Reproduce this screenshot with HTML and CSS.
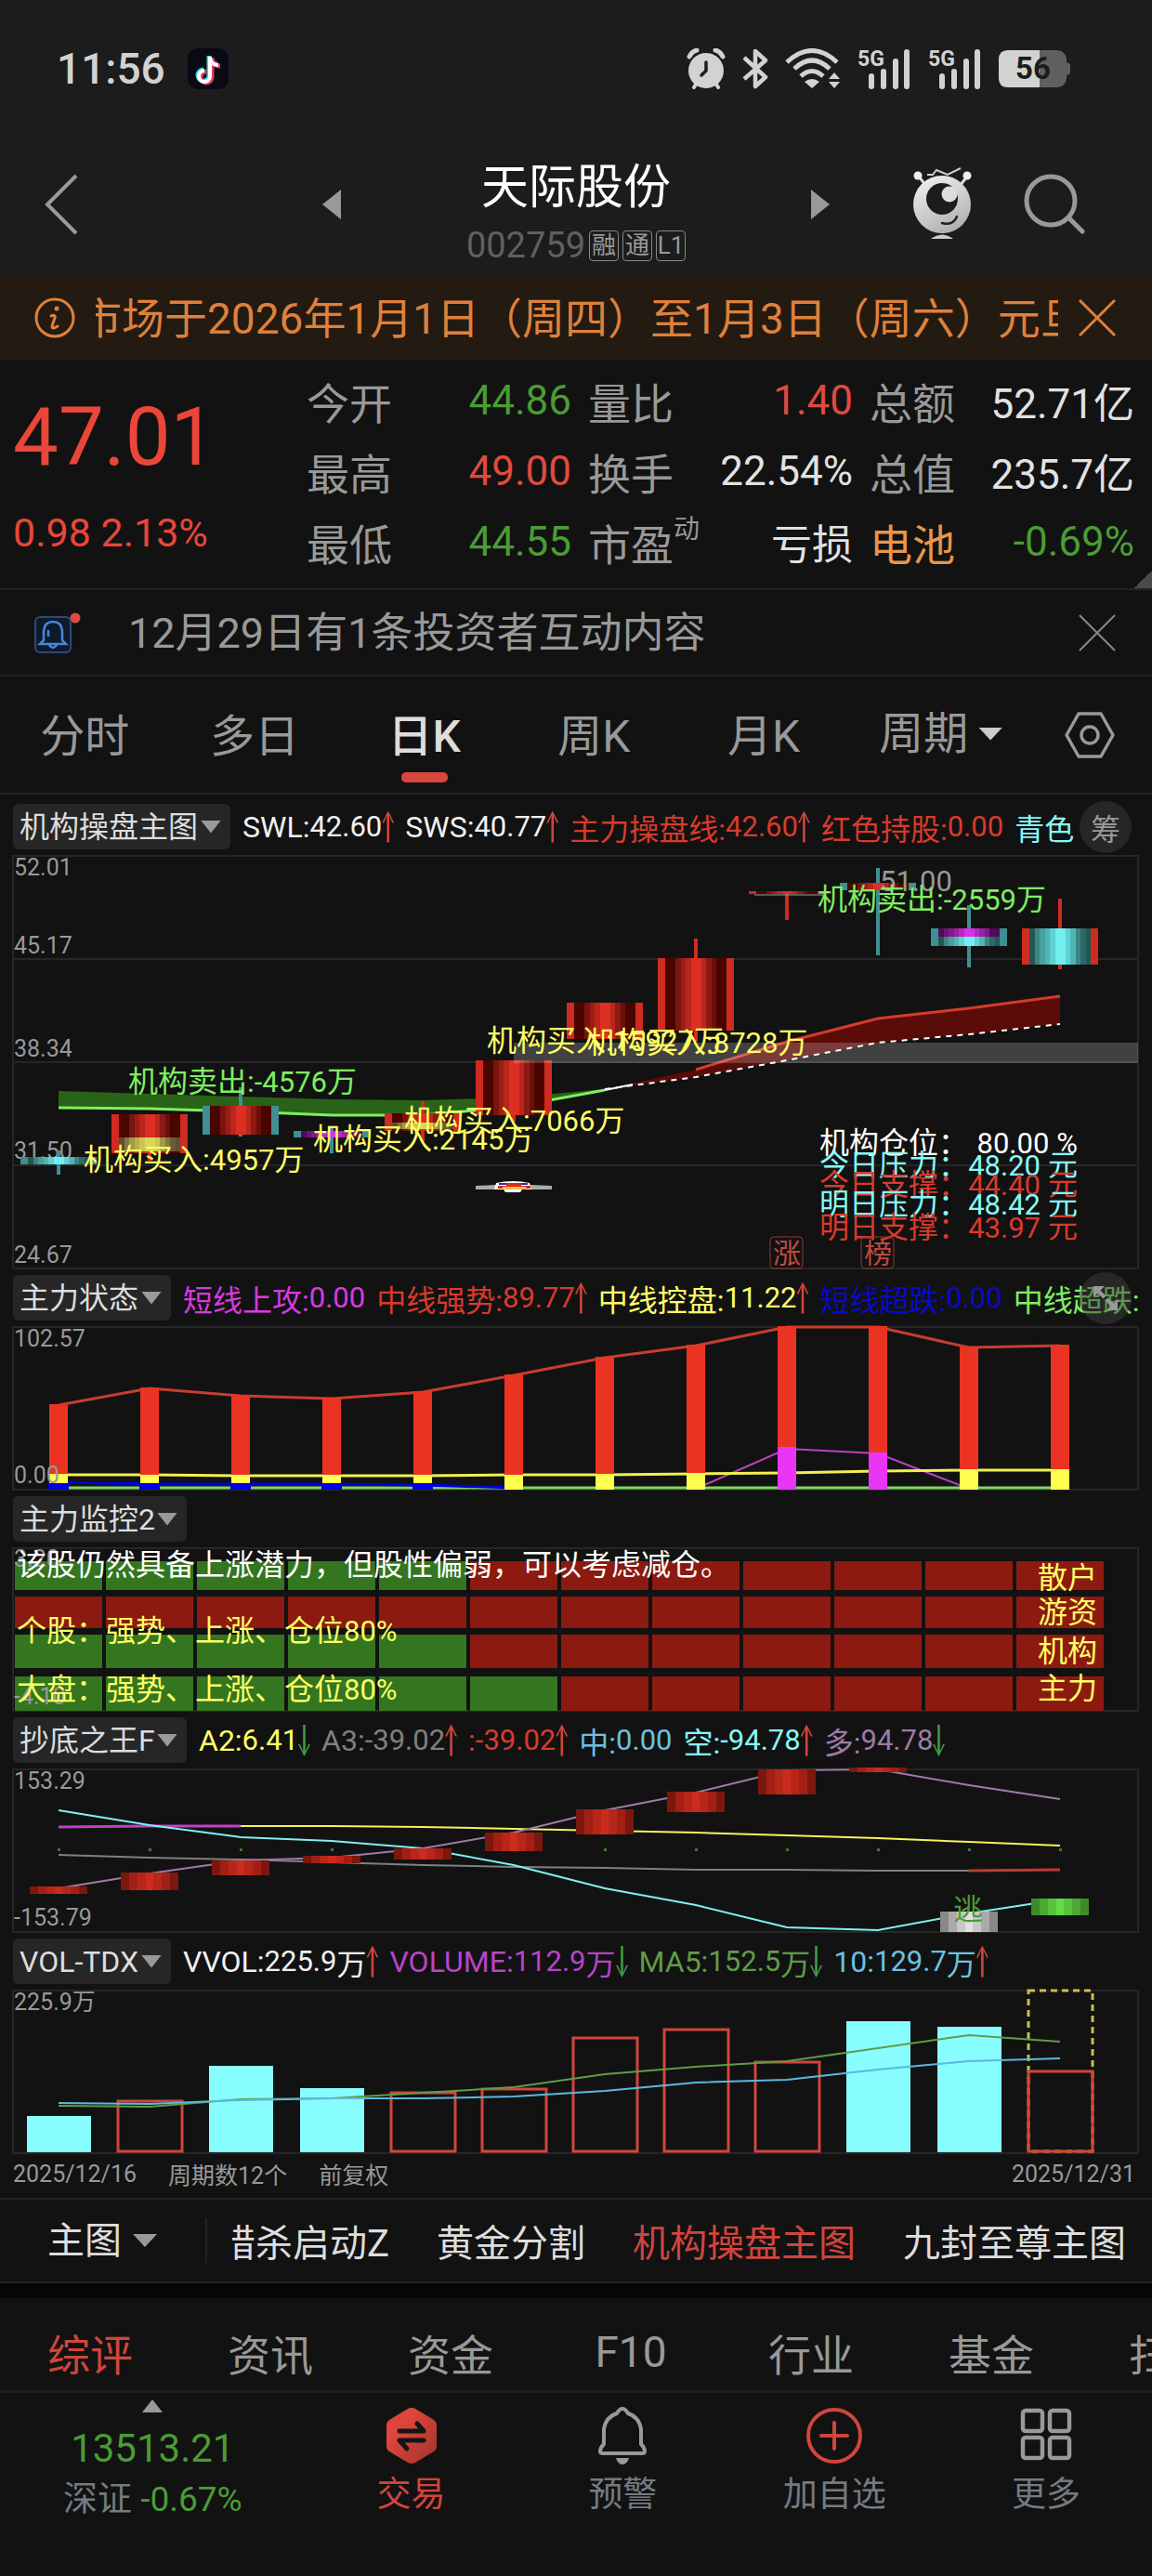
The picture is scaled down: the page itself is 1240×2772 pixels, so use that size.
FILE: index.html
```html
<!DOCTYPE html>
<html lang="zh-CN">
<head>
    <meta charset="UTF-8">
    <meta name="viewport" content="width=device-width, initial-scale=1.0">
    <title>天际股份 002759</title>
    <link rel="stylesheet" href="styles.css">
</head>
<body>
    <header class="top-header">
        <div class="status-bar">
            <span class="clock">11:56</span>
            <svg class="app-icon" viewBox="0 0 44 44" width="44" height="44">
                <rect width="44" height="44" rx="11" fill="#0a0a16"/>
                <g fill="none" stroke-width="5">
                    <path d="M23 8v21a6 6 0 1 1-6-6M23 9c1 6 5 8 9 8" stroke="#38d6d6"/>
                    <path d="M26 10v21a6 6 0 1 1-6-6M26 11c1 6 5 8 9 8" stroke="#e8385c"/>
                    <path d="M24 9v21a6 6 0 1 1-6-6M24 10c1 6 5 8 9 8" stroke="#fff" stroke-width="4"/>
                </g>
            </svg>
            <div class="status-icons">
                <svg viewBox="0 0 42 44" width="42" height="44">
                    <g fill="none" stroke="#d2d2d2" stroke-linecap="round">
                        <path d="M3 9q3-6 8-7M39 9q-3-6-8-7" stroke-width="5"/>
                        <path d="M11 37l-3 5M31 37l3 5" stroke-width="4"/>
                    </g>
                    <circle cx="21" cy="24" r="19" fill="#d2d2d2"/>
                    <path d="M21 15v9l-5 5" fill="none" stroke="#1c1c1c" stroke-width="3.5" stroke-linecap="round"/>
                </svg>
                <svg viewBox="0 0 28 44" width="28" height="44">
                    <path d="M2 10l23 21-11 10V3l11 10L2 33" fill="none" stroke="#d2d2d2" stroke-width="4.5" stroke-linejoin="round"/>
                </svg>
                <svg viewBox="0 0 60 44" width="60" height="44">
                    <g fill="none" stroke="#d2d2d2" stroke-width="5">
                        <path d="M2 15Q29-10 56 15"/>
                        <path d="M10 22Q29 4 48 22"/>
                        <path d="M17 30Q29 19 41 30"/>
                    </g>
                    <path d="M21 36q8-6 16 0l-8 7zM47 33l6-7 6 7zM47 36l6 7 6-7z" fill="#d2d2d2"/>
                </svg>
                <svg class="signal" viewBox="0 0 58 44" width="58" height="44">
                    <text class="net" x="0" y="19">5G</text>
                    <path d="M15 41V30M28 41V25M41 41V14M53 41V4" stroke="#d2d2d2" stroke-width="6" stroke-linecap="round"/>
                </svg>
                <svg class="signal" viewBox="0 0 58 44" width="58" height="44">
                    <text class="net" x="0" y="19">5G</text>
                    <path d="M15 41V30M28 41V25M41 41V14M53 41V4" stroke="#d2d2d2" stroke-width="6" stroke-linecap="round"/>
                </svg>
                <svg viewBox="0 0 78 40" width="78" height="40">
                    <rect width="73" height="40" rx="10" fill="#606060"/>
                    <path d="M73 13q4 1 4 4v6q0 3-4 4z" fill="#606060"/>
                    <path d="M10 0h34v40H10Q0 40 0 30V10Q0 0 10 0z" fill="#d2d2d2"/>
                    <text class="battery-text" x="37" y="31" text-anchor="middle">56</text>
                </svg>
            </div>
        </div>
        <div class="title-bar">
            <button class="back-button" aria-label="返回">
                <svg viewBox="0 0 36 66" width="36" height="66"><path d="M34 2L3 33l31 31" fill="none" stroke="#999" stroke-width="4"/></svg>
            </button>
            <div class="stock-switch">
                <button aria-label="上一只"><svg viewBox="0 0 20 32" width="20" height="32"><path d="M20 0v32L0 16z" fill="#999"/></svg></button>
                <div class="stock-name">
                    <h1>天际股份</h1>
                    <div class="stock-code">002759 <span class="badge">融</span><span class="badge">通</span><span class="badge">L1</span></div>
                </div>
                <button aria-label="下一只"><svg viewBox="0 0 20 32" width="20" height="32"><path d="M0 0v32l20-16z" fill="#999"/></svg></button>
            </div>
            <div class="title-actions">
                <button aria-label="助手">
                    <svg viewBox="0 0 64 80" width="64" height="80">
                        <defs>
                            <linearGradient id="robot" x1="0" y1="0" x2="0.5" y2="1">
                                <stop offset="0" stop-color="#f4f4f4"/>
                                <stop offset="1" stop-color="#b4b4b4"/>
                            </linearGradient>
                        </defs>
                        <path d="M6 10l8 10M58 10l-8 10" stroke="#ddd" stroke-width="3"/>
                        <circle cx="5" cy="9" r="4.5" fill="#eee"/>
                        <circle cx="58" cy="9" r="4.5" fill="#eee"/>
                        <path d="M15 8h6l4-5 12 5L51 1" fill="none" stroke="#ccc" stroke-width="2"/>
                        <circle cx="31" cy="40" r="31" fill="url(#robot)"/>
                        <circle cx="31" cy="34" r="17" fill="#1c1c1c"/>
                        <circle cx="39" cy="29" r="8.5" fill="#ddd"/>
                        <path d="M31 60q12 3 16-7" fill="none" stroke="#222" stroke-width="2.5" stroke-linecap="round"/>
                        <path d="M19 77q12-9 24 0z" fill="#ccc"/>
                    </svg>
                </button>
                <button aria-label="搜索">
                    <svg viewBox="0 0 66 68" width="66" height="68">
                        <circle cx="29" cy="30" r="26" fill="none" stroke="#999" stroke-width="5"/>
                        <path d="M49 49l14 14" stroke="#999" stroke-width="5" stroke-linecap="round"/>
                    </svg>
                </button>
            </div>
        </div>
    </header>

    <div class="notice-bar">
        <svg viewBox="0 0 44 44" width="44" height="44">
            <circle cx="22" cy="22" r="20" fill="none" stroke="#dd813c" stroke-width="3"/>
            <circle cx="24" cy="12" r="2.5" fill="#dd813c"/>
            <path d="M18 20q5-2 4 2l-3 9q0 4 6 0" fill="none" stroke="#dd813c" stroke-width="3" stroke-linecap="round"/>
        </svg>
        <p class="notice-text">市场于2026年1月1日（周四）至1月3日（周六）元旦</p>
        <button class="close-button" aria-label="关闭公告"><svg viewBox="0 0 40 40" width="40" height="40"><path d="M1 1l38 38M39 1L1 39" stroke="#dd813c" stroke-width="3"/></svg></button>
    </div>

    <section class="quote">
        <div class="price-box">
            <div class="price">47.01</div>
            <div class="change">0.98 2.13%</div>
        </div>
        <dl class="quote-grid">
            <div><dt>今开</dt><dd class="down">44.86</dd></div>
            <div><dt>量比</dt><dd class="up">1.40</dd></div>
            <div><dt>总额</dt><dd>52.71亿</dd></div>
            <div><dt>最高</dt><dd class="up">49.00</dd></div>
            <div><dt>换手</dt><dd>22.54%</dd></div>
            <div><dt>总值</dt><dd>235.7亿</dd></div>
            <div><dt>最低</dt><dd class="down">44.55</dd></div>
            <div><dt>市盈<sup>动</sup></dt><dd>亏损</dd></div>
            <div><dt class="sector">电池</dt><dd class="down">-0.69%</dd></div>
        </dl>
    </section>

    <div class="message-row">
        <svg viewBox="0 0 50 44" width="50" height="44">
            <rect x="1" y="5" width="38" height="38" rx="5" fill="#0e1a2c" stroke="#2d4a78" stroke-width="2"/>
            <path d="M10 30V20q1-10 10-10t10 10v10l4 4H6zM16 35q4 6 8 0M15 19v7" fill="none" stroke="#4a86d8" stroke-width="2.5"/>
            <circle cx="44" cy="6" r="5.5" fill="#e04a3f"/>
        </svg>
        <a class="message-link" href="#">12月29日有1条投资者互动内容</a>
        <button class="close-button" aria-label="关闭消息"><svg viewBox="0 0 40 40" width="40" height="40"><path d="M1 1l38 38M39 1L1 39" stroke="#888" stroke-width="2"/></svg></button>
    </div>

    <nav class="period-tabs">
        <button>分时</button>
        <button>多日</button>
        <button class="active">日K</button>
        <button>周K</button>
        <button>月K</button>
        <label class="drop"><select aria-label="周期"><option>周期</option></select></label>
        <button class="settings" aria-label="设置">
            <svg viewBox="0 0 54 50" width="54" height="50">
                <path d="M15 2h24l13 23-13 23H15L2 25z" fill="none" stroke="#999" stroke-width="3.5" stroke-linejoin="round"/>
                <circle cx="27" cy="25" r="9" fill="none" stroke="#999" stroke-width="3.5"/>
            </svg>
        </button>
    </nav>

    <main class="charts">
        <section class="panel">
            <div class="panel-header">
                <label class="indicator"><select aria-label="主图指标"><option>机构操盘主图</option></select></label>
                <span class="item white">SWL:<b>42.60</b><i class="arrow-up"></i></span>
                <span class="item white">SWS:<b>40.77</b><i class="arrow-up"></i></span>
                <span class="item red">主力操盘线:<b>42.60</b><i class="arrow-up"></i></span>
                <span class="item red">红色持股:<b>0.00</b></span>
                <span class="item cyan">青色</span>
                <button class="round-button">筹</button>
            </div>
            <svg class="plot" id="mainChart" viewBox="0 0 1211 444"></svg>
        </section>
        <section class="panel">
            <div class="panel-header">
                <label class="indicator"><select aria-label="副图1指标"><option>主力状态</option></select></label>
                <span class="item magenta">短线上攻:<b>0.00</b></span>
                <span class="item red">中线强势:<b>89.77</b><i class="arrow-up"></i></span>
                <span class="item yellow">中线控盘:<b>11.22</b><i class="arrow-up"></i></span>
                <span class="item blue">短线超跌:<b>0.00</b></span>
                <span class="item green">中线超跌:</span>
                <button class="round-button clear" aria-label="放大">
                    <svg viewBox="0 0 28 28" width="28" height="28"><path d="M1 1h12L1 13zM27 27H15l12-12z" fill="#999"/><path d="M4 4l9 9M24 24l-9-9" stroke="#999" stroke-width="4"/></svg>
                </button>
            </div>
            <svg class="plot" id="stateChart" viewBox="0 0 1211 175"></svg>
        </section>
        <section class="panel">
            <div class="panel-header">
                <label class="indicator"><select aria-label="副图2指标"><option>主力监控2</option></select></label>
            </div>
            <svg class="plot" id="monitorChart" viewBox="0 0 1211 175"></svg>
        </section>
        <section class="panel">
            <div class="panel-header">
                <label class="indicator"><select aria-label="副图3指标"><option>抄底之王F</option></select></label>
                <span class="item yellow">A2:<b>6.41</b><i class="arrow-down"></i></span>
                <span class="item gray">A3:<b>-39.02</b><i class="arrow-up"></i></span>
                <span class="item red">:<b>-39.02</b><i class="arrow-up"></i></span>
                <span class="item sky">中:<b>0.00</b></span>
                <span class="item cyan">空:<b>-94.78</b><i class="arrow-up"></i></span>
                <span class="item purple">多:<b>94.78</b><i class="arrow-down"></i></span>
            </div>
            <svg class="plot" id="bottomChart" viewBox="0 0 1211 175"></svg>
        </section>
        <section class="panel">
            <div class="panel-header">
                <label class="indicator"><select aria-label="副图4指标"><option>VOL-TDX</option></select></label>
                <span class="item white">VVOL:<b>225.9</b>万<i class="arrow-up"></i></span>
                <span class="item violet">VOLUME:<b>112.9</b>万<i class="arrow-down"></i></span>
                <span class="item olive">MA5:<b>152.5</b>万<i class="arrow-down"></i></span>
                <span class="item sky">10:<b>129.7</b>万<i class="arrow-up"></i></span>
            </div>
            <svg class="plot" id="volumeChart" viewBox="0 0 1211 175"></svg>
        </section>
        <div class="date-row">
            <span>2025/12/16</span>
            <span>周期数12个</span>
            <span>前复权</span>
            <span class="end-date">2025/12/31</span>
        </div>
    </main>

    <div class="formula-bar">
        <label class="drop"><select aria-label="图表位置"><option>主图</option></select></label>
        <div class="formula-list">
            <button>猎杀启动Z</button>
            <button>黄金分割</button>
            <button class="active">机构操盘主图</button>
            <button>九封至尊主图</button>
        </div>
    </div>

    <nav class="info-tabs">
        <button class="active">综评</button>
        <button>资讯</button>
        <button>资金</button>
        <button>F10</button>
        <button>行业</button>
        <button>基金</button>
        <button>扫雷</button>
    </nav>

    <footer class="bottom-nav">
        <a class="index-box" href="#">
            <svg viewBox="0 0 22 14" width="22" height="14"><path d="M11 0l11 14H0z" fill="#999"/></svg>
            <strong>13513.21</strong>
            <span>深证 <em>-0.67%</em></span>
        </a>
        <a class="nav-item trade" href="#">
            <svg viewBox="0 0 56 62" width="56" height="62">
                <defs>
                    <linearGradient id="trade" x1="0" y1="0" x2="1" y2="1">
                        <stop offset="0.3" stop-color="#e0453b"/>
                        <stop offset="1" stop-color="#9c342d"/>
                    </linearGradient>
                </defs>
                <path d="M24 2q4-2 8 0l20 12q3 2 3 5v24q0 3-3 5L32 60q-4 2-8 0L4 48q-3-2-3-5V19q0-3 3-5z" fill="url(#trade)"/>
                <path d="M15 26h26l-7-8M41 36H15l8 9" fill="none" stroke="#151515" stroke-width="5" stroke-linecap="round" stroke-linejoin="round"/>
            </svg>
            <span>交易</span>
        </a>
        <a class="nav-item" href="#">
            <svg viewBox="0 0 56 62" width="56" height="62">
                <path d="M8 40V24Q10 11 22 7q6-10 12 0 12 4 14 17v16q4 4 4 8 0 2-3 2H7q-3 0-3-2 0-4 4-8z" fill="none" stroke="#999" stroke-width="4"/>
                <path d="M21 55h14q-2 7-7 7t-7-7z" fill="#999"/>
            </svg>
            <span>预警</span>
        </a>
        <a class="nav-item" href="#">
            <svg viewBox="0 0 62 62" width="62" height="62">
                <circle cx="31" cy="31" r="28" fill="none" stroke="#d0453c" stroke-width="4"/>
                <path d="M31 17v28M17 31h28" stroke="#d0453c" stroke-width="4" stroke-linecap="round"/>
            </svg>
            <span>加自选</span>
        </a>
        <a class="nav-item" href="#">
            <svg viewBox="0 0 56 62" width="56" height="62">
                <g fill="none" stroke="#999" stroke-width="4.5">
                    <rect x="3" y="4" width="21" height="22" rx="3"/>
                    <rect x="32" y="4" width="21" height="22" rx="3"/>
                    <rect x="3" y="33" width="21" height="22" rx="3"/>
                    <rect x="32" y="33" width="21" height="22" rx="3"/>
                </g>
            </svg>
            <span>更多</span>
        </a>
    </footer>

    <script src="script.js"></script>
</body>
</html>
```
FILE: styles.css
```css
* {
    box-sizing: border-box;
}

body {
    margin: 0;
    font-family: Roboto, "Noto Sans CJK SC", sans-serif;
    background: #121212;
    color: #999;
    overflow-x: hidden;
}

h1, p, dl, dd {
    margin: 0;
}

button, select {
    margin: 0;
    padding: 0;
    border: none;
    background: none;
    color: inherit;
    font: inherit;
    white-space: nowrap;
    appearance: none;
    cursor: pointer;
}

a {
    color: inherit;
    text-decoration: none;
}

svg {
    display: block;
    flex-shrink: 0;
}

/* Header */
.top-header {
    background: #1c1c1c;
    height: 296px;
}

.status-bar {
    display: flex;
    align-items: center;
    gap: 24px;
    height: 148px;
    padding: 0 87px 0 61px;
}

.clock {
    color: #d2d2d2;
    font-size: 46px;
    font-weight: 500;
}

.status-icons {
    display: flex;
    align-items: center;
    gap: 18px;
    margin-left: auto;
}

.signal {
    overflow: visible;
}

.net {
    fill: #d2d2d2;
    font-size: 23px;
    font-weight: 700;
}

.battery-text {
    fill: #1c1c1c;
    font-size: 33px;
    font-weight: 700;
}

.title-bar {
    display: grid;
    grid-template-columns: 28% 44% 28%;
    align-items: center;
    height: 138px;
}

.back-button {
    justify-self: start;
    padding-left: 48px;
}

.stock-switch {
    display: flex;
    align-items: center;
    justify-content: space-between;
}

.stock-name {
    padding-top: 20px;
    text-align: center;
}

.stock-name h1 {
    color: #fff;
    font-size: 51px;
    font-weight: 400;
    line-height: 68px;
}

.stock-code {
    display: flex;
    align-items: center;
    justify-content: center;
    gap: 4px;
    color: #606060;
    font-size: 38px;
    line-height: 56px;
}

.badge {
    width: 32px;
    height: 33px;
    border: 1px solid #888;
    border-radius: 4px;
    color: #999;
    font-size: 26px;
    line-height: 31px;
}

.title-actions {
    display: flex;
    align-items: center;
    justify-content: flex-end;
    gap: 55px;
    padding-right: 72px;
}

/* Notice */
.notice-bar {
    display: flex;
    align-items: center;
    gap: 22px;
    height: 91px;
    padding: 0 39px 0 37px;
    background: #231a12;
    color: #dd813c;
    font-size: 46px;
}

.notice-text {
    flex: 1;
    padding-bottom: 6px;
    overflow: hidden;
    text-indent: -18px;
    white-space: nowrap;
}

/* Quote */
.quote {
    display: flex;
    height: 248px;
    padding: 6px 19px 0 14px;
    border-bottom: 2px solid #232323;
    background: linear-gradient(135deg, transparent 50%, #4a4a4a 50%) right bottom / 20px 18px no-repeat;
}

.price-box {
    width: 316px;
    color: #ea4639;
}

.price {
    padding-top: 27px;
    font-size: 87px;
    line-height: 100px;
}

.change {
    padding-top: 26px;
    font-size: 43px;
    line-height: 54px;
}

.quote-grid {
    flex: 1;
    display: grid;
    grid-template-columns: repeat(3, 1fr);
    grid-auto-rows: 76px;
    column-gap: 18px;
    font-size: 46px;
}

.quote-grid div {
    display: flex;
    align-items: center;
    justify-content: space-between;
}

.quote-grid dd {
    color: #e2e2e2;
    font-size: 44px;
}

.quote-grid sup {
    font-size: 28px;
    line-height: 0;
    vertical-align: 24px;
}

.quote-grid .up {
    color: #e04a3f;
}

.quote-grid .down {
    color: #4a9c35;
}

.quote-grid .sector {
    color: #e8964a;
}

/* Message */
.message-row {
    display: flex;
    align-items: center;
    height: 93px;
    padding: 0 39px 0 37px;
    border-bottom: 2px solid #232323;
    font-size: 45px;
}

.message-link {
    flex: 1;
    padding: 0 0 6px 51px;
}

/* Period tabs */
.period-tabs {
    display: flex;
    height: 127px;
    padding-right: 40px;
    border-bottom: 2px solid #232323;
    font-size: 48px;
}

.period-tabs button,
.period-tabs .drop {
    position: relative;
    display: flex;
    flex: 1;
    align-items: center;
    justify-content: center;
    padding-bottom: 6px;
}

.period-tabs .drop {
    padding: 0 0 2px 8px;
}

.period-tabs .settings {
    flex: 0 0 96px;
    justify-content: flex-end;
    padding-bottom: 0;
}

.period-tabs .active {
    color: #ddd;
    font-weight: 500;
}

.period-tabs .active::after {
    content: "";
    position: absolute;
    bottom: 11px;
    width: 50px;
    height: 11px;
    border-radius: 5px;
    background: #d8473d;
}

.drop {
    display: flex;
    align-items: center;
    gap: 10px;
}

.drop::after,
.indicator::after {
    content: "";
    width: 26px;
    height: 14px;
    background: #ccc;
    clip-path: polygon(0 0, 100% 0, 50% 100%);
}

/* Chart panels */
.charts {
    padding: 3px 0 0;
}

.panel-header {
    position: relative;
    display: flex;
    align-items: center;
    gap: 12px;
    height: 63px;
    padding-left: 14px;
    overflow: hidden;
    font-size: 32px;
    white-space: nowrap;
}

.indicator {
    display: flex;
    align-items: center;
    gap: 2px;
    height: 49px;
    margin-right: 1px;
    padding: 0 10px 0 7px;
    border-radius: 6px;
    background: #262626;
    color: #ddd;
}

.indicator::after {
    width: 22px;
    background: #999;
}

.item {
    display: flex;
    align-items: center;
}

.item b {
    font-size: 31px;
    font-weight: 400;
}

.arrow-up,
.arrow-down {
    width: 13px;
    height: 34px;
    background: #d0453c;
    clip-path: polygon(50% 0, 100% 38%, 85% 38%, 60% 16%, 60% 100%, 40% 100%, 40% 16%, 15% 38%, 0 38%);
}

.arrow-down {
    background: #3f9a46;
    transform: rotate(180deg);
}

.round-button {
    position: absolute;
    top: 4px;
    right: 22px;
    display: flex;
    align-items: center;
    justify-content: center;
    width: 56px;
    height: 56px;
    border-radius: 50%;
    background: #262626;
}

.round-button.clear {
    background: rgba(60, 60, 60, 0.5);
}

.white { color: #f0f0f0; }
.red { color: #d93a2b; }
.cyan { color: #86fafa; }
.yellow { color: #ffff66; }
.magenta { color: #d83ae0; }
.violet { color: #b844c8; }
.blue { color: #0a0ac8; }
.green { color: #7fee62; }
.gray { color: #808080; }
.sky { color: #6cc0e0; }
.purple { color: #9e7ba6; }
.olive { color: #5f9c48; }

.plot {
    width: calc(100% - 29px);
    height: auto;
    margin-left: 14px;
    overflow: visible;
    font-size: 32px;
}

.plot .axis {
    fill: #999;
    font-size: 25px;
}

.plot .num {
    font-size: 31px;
}

.plot .tag {
    fill: #c04a40;
    font-size: 30px;
}

.date-row {
    display: flex;
    align-items: center;
    gap: 34px;
    height: 48px;
    padding: 0 18px 4px 14px;
    font-size: 25px;
}

.end-date {
    margin-left: auto;
}

/* Formula bar */
.formula-bar {
    display: flex;
    align-items: center;
    height: 92px;
    border-top: 2px solid #232323;
    border-bottom: 2px solid #232323;
    color: #ddd;
    font-size: 40px;
}

.formula-bar .drop {
    gap: 12px;
    width: 223px;
    height: 48px;
    padding-left: 51px;
    border-right: 2px solid #232323;
}

.formula-bar .drop::after {
    background: #999;
}

.formula-list {
    display: flex;
    flex: 1;
    gap: 51px;
    margin-left: 26px;
    overflow: hidden;
}

.formula-list button:first-child {
    margin-left: -14px;
}

.formula-list .active {
    color: #d0453c;
}

/* Info tabs */
.info-tabs {
    display: flex;
    height: 118px;
    overflow: hidden;
    border-top: 16px solid #060606;
    border-bottom: 3px solid #1e1e1e;
    font-size: 46px;
}

.info-tabs button {
    flex: 0 0 194px;
    padding-top: 16px;
}

.info-tabs .active {
    color: #d0453c;
}

/* Bottom nav */
.bottom-nav {
    display: flex;
    height: 198px;
    padding-top: 7px;
    color: #737b80;
    font-size: 37px;
}

.index-box {
    display: flex;
    flex: 0 0 26.5%;
    flex-direction: column;
    align-items: center;
}

.index-box strong {
    padding-top: 12px;
    color: #4a9c35;
    font-size: 42px;
    font-weight: 400;
    line-height: 54px;
}

.index-box span {
    line-height: 56px;
}

.index-box em {
    color: #4a9c35;
    font-style: normal;
}

.nav-item {
    display: flex;
    flex: 1;
    flex-direction: column;
    align-items: center;
    padding-top: 8px;
    line-height: 66px;
}

.nav-item.trade {
    color: #d0453c;
}
```
FILE: script.js
```js
const STEP = 98;
const X0 = 49;

const RED_STEPS = ['#4a0500', '#4a0500', '#7a140e', '#9c1d15', '#b8261c', '#dc2e22', '#dc2e22', '#b8261c', '#8c1a12', '#6a100a', '#4a0500', '#4a0500'];
const CYAN_STEPS = ['#235654', '#3c8583', '#46a09e', '#4fb5b5', '#5fd0d2', '#70eef0', '#70eef0', '#5fd0d2', '#4fb5b5', '#3c8583', '#2c6866', '#235654'];
const PURPLE_STEPS = ['#500a5c', '#6c1478', '#84198e', '#9a20a6', '#b828c0', '#dc30e8', '#dc30e8', '#b828c0', '#9a20a6', '#84198e', '#500a5c', '#500a5c'];
const YELLOW_STEPS = ['#5c5030', '#85773c', '#a39a44', '#b8b04c', '#ccc650', '#d8d654', '#d8d654', '#ccc650', '#a39a44', '#85773c', '#6c5c34', '#5c5030'];
const BRICK_STEPS = ['#7c170e', '#a31f15', '#b8261a', '#cc2b1e', '#b8261a', '#a31f15', '#7c170e'];
const LIME_STEPS = ['#3c8a28', '#4ca834', '#58c43c', '#62dc44', '#58c43c', '#4ca834', '#3c8a28'];
const SILVER_STEPS = ['#888', '#aaa', '#c8c8c8', '#e0e0e0', '#c8c8c8', '#aaa', '#888'];

function cx(i) {
    return X0 + STEP * i;
}

function rect(x, y, w, h, fill) {
    return `<rect x="${x}" y="${y}" width="${w}" height="${h}" fill="${fill}"/>`;
}

function line(x1, y1, x2, y2, color, width) {
    return `<line x1="${x1}" y1="${y1}" x2="${x2}" y2="${y2}" stroke="${color}" stroke-width="${width}"/>`;
}

// ys holds one value per bar, beginning at bar `start`
function polyline(ys, color, width, start = 0, dash = '') {
    const points = ys.map((y, i) => `${cx(i + start)},${y}`).join(' ');
    return `<polyline points="${points}" fill="none" stroke="${color}" stroke-width="${width}" stroke-dasharray="${dash}"/>`;
}

function band(top, bottom, start, fill) {
    const a = top.map((y, i) => `${cx(i + start)},${y}`);
    const b = bottom.map((y, i) => `${cx(i + start)},${y}`).reverse();
    return `<polygon points="${a.concat(b).join(' ')}" fill="${fill}"/>`;
}

function stripes(i, top, bottom, width, steps) {
    const w = width / steps.length;
    return `<g shape-rendering="crispEdges">` +
        steps.map((c, n) => rect(cx(i) - width / 2 + n * w, top, w, bottom - top, c)).join('') + `</g>`;
}

// digits are set a little smaller than the Chinese characters
function text(x, y, str, color) {
    const body = str.replace(/[-\d.%]+/g, m => `<tspan class="num">${m}</tspan>`);
    return `<text x="${x}" y="${y}" fill="${color}">${body}</text>`;
}

function axis(y, str) {
    return `<text class="axis" x="1" y="${y}">${str}</text>`;
}

function frame(height) {
    return `<rect x="0" y="0" width="1211" height="${height}" fill="none" stroke="#262626" stroke-width="2"/>`;
}

function draw(id, parts) {
    document.getElementById(id).innerHTML = parts.join('');
}

function drawMain() {
    const TEAL = '#3f8f92';
    const RED = '#cf2b20';
    const candles = [
        { side: TEAL, wick: [317, 343], body: [[324, 332, CYAN_STEPS]] },
        { side: RED, wick: [318, 328], body: [[278, 320, RED_STEPS], [303, 318, YELLOW_STEPS]] },
        { side: TEAL, wick: [249, 302], body: [[269, 300, RED_STEPS]] },
        { side: TEAL, wick: [291, 320], body: [[296, 303, PURPLE_STEPS]] },
        { side: RED, wick: [264, 307], body: [[277, 296, RED_STEPS], [287, 294, YELLOW_STEPS]] },
        { side: RED, wick: [278, 286], body: [[220, 279, RED_STEPS]] },
        { side: RED, wick: [160, 197], body: [[158, 197, RED_STEPS]] },
        { side: RED, wick: [89, 200], body: [[110, 188, RED_STEPS]] },
        { side: RED, wick: [40, 69], body: [[38, 41, RED_STEPS]] },
        { side: TEAL, wick: [13, 107], body: [[29, 37, RED_STEPS]] },
        { side: TEAL, wick: [53, 120], body: [[78, 87, PURPLE_STEPS], [87, 97, CYAN_STEPS]] },
        { side: RED, wick: [46, 122], body: [[78, 117, CYAN_STEPS]] }
    ];
    const out = [frame(444)];
    [111, 222, 333].forEach(y => out.push(line(0, y, 1211, y, '#262626', 2)));
    out.push(axis(21, '52.01'), axis(105, '45.17'), axis(216, '38.34'), axis(326, '31.50'), axis(438, '24.67'));

    // trend bands
    const dash = [253, 256, 259, 262, 263, 260, 251, 238, 220, 201, 192, 181];
    const greenLine = [271, 272, 275, 279, 279, 270, 252];
    const redLine = [230, 200, 175, 164, 151];
    out.push(band(dash.slice(0, 7), greenLine, 0, '#296318'));
    out.push(polyline(greenLine, '#7fee62', 3));
    out.push(band([251].concat(redLine), dash.slice(6), 6, '#5a0c08'));
    out.push(polyline(redLine, '#d63a2c', 3, 7));
    out.push(polyline(dash.slice(6), '#fff', 2, 6, '6 6'));
    out.push(line(637, 252, 667, 246, '#fff', 2));

    candles.forEach((c, i) => {
        const top = Math.min(...c.body.map(b => b[0]));
        const bottom = Math.max(...c.body.map(b => b[1]));
        out.push(line(cx(i), c.wick[0], cx(i), c.wick[1], c.side, 4));
        out.push(rect(cx(i) - 41, top, 82, bottom - top, c.side));
        c.body.forEach(b => out.push(stripes(i, b[0], b[1], 66, b[2])));
    });
    out.push(line(798, 42, 872, 42, '#a09a9a', 1));
    out.push(rect(539, 201, 672, 22, 'rgba(255, 255, 255, 0.2)'));

    // ingot mark under the sixth bar
    out.push('<path d="M498 359v-4l22-1h38l22 1v4z" fill="#aaa"/>');
    out.push('<path d="M520 352q18-4 36 0l2 7h-10l-2 3h-16l-2-3h-10z" fill="#fff"/>');
    out.push(rect(523, 352, 31, 2, '#2b2bb0'), rect(522, 355, 35, 3, '#d92a1e'), rect(531, 352, 16, 4, '#d92a1e'), rect(527, 356, 25, 3, '#f6c24a'));

    out.push(text(124, 254, '机构卖出:-4576万', '#7fee62'));
    out.push(text(76, 338, '机构买入:4957万', '#ffff66'));
    out.push(text(323, 316, '机构买入:2145万', '#ffff66'));
    out.push(text(421, 296, '机构买入:7066万', '#ffff66'));
    out.push(text(510, 210, '机构买入:15927万', '#ffff66'));
    out.push(text(618, 212, '机构买入:8728万', '#ffff66'));
    out.push(text(933, 38, '51.00', '#999'));
    out.push(text(866, 58, '机构卖出:-2559万', '#7fee62'));

    const levels = [
        ['机构仓位：', '80.00 %', 320, '#fff'],
        ['今日压力：', '48.20 元', 344, '#86fafa'],
        ['今日支撑：', '44.40 元', 365, '#d93a2b'],
        ['明日压力：', '48.42 元', 386, '#86fafa'],
        ['明日支撑：', '43.97 元', 411, '#d93a2b']
    ];
    levels.forEach(([name, value, y, color]) => {
        out.push(text(868, y, name, color));
        out.push(`<g text-anchor="end">${text(1146, y, value, color)}</g>`);
    });
    [['涨', 815], ['榜', 913]].forEach(([name, x]) => {
        out.push(`<rect x="${x}" y="410" width="35" height="34" rx="4" fill="none" stroke="#8c3a32"/>`);
        out.push(`<text class="tag" x="${x + 3}" y="438">${name}</text>`);
    });
    draw('mainChart', out);
}

function drawState() {
    const tops = [83, 65, 73, 76, 69, 51, 32, 19, -1, -1, 21, 19];
    const lows = [158, 159, 159, 159, 159, 159, 158, 157, 129, 135, 153, 153];
    const out = [frame(175)];
    out.push(polyline(tops.map(y => y + 1), '#c83c30', 3));
    out.push(polyline(Array(12).fill(173), '#7fd860', 3));
    out.push(polyline([167, 169, 169, 169, 170, 173], '#0000dc', 3));
    out.push(polyline([174, 131, 136, 174], '#b844c0', 2, 7));
    out.push(polyline([159, 159, 160, 160, 160, 159, 159, 158, 157, 155, 154, 154], '#f0f050', 3));
    tops.forEach((y, i) => {
        const low = i === 8 || i === 9 ? '#e935f5' : '#ffff50';
        out.push(rect(cx(i) - 10, y, 20, 175 - y, '#eb3323'));
        out.push(rect(cx(i) - 10, lows[i], 20, 175 - lows[i], low));
        if (i < 5) {
            out.push(rect(cx(i) - 11, 168, 22, 7, '#0000e6'));
        }
    });
    out.push(axis(21, '102.57'), axis(168, '0.00'));
    draw('stateChart', out);
}

function drawMonitor() {
    // [top, height, number of green cells]
    const rows = [[14, 31, 5], [52, 34, 0], [93, 36, 5], [138, 37, 6]];
    const out = [frame(175)];
    rows.forEach(([y, h, green]) => {
        for (let i = 0; i < 12; i++) {
            out.push(rect(2 + STEP * i, y, 94, h, i < green ? '#34761f' : '#8c1a10'));
        }
    });
    out.push(axis(20, '3.20'), axis(168, '-4.10'));
    out.push(text(4, 29, '该股仍然具备上涨潜力，但股性偏弱，可以考虑减仓。', '#fff'));
    out.push(text(4, 100, '个股：强势、上涨、仓位80%', '#ffff66'));
    out.push(text(4, 163, '大盘：强势、上涨、仓位80%', '#ffff66'));
    [['散户', 43], ['游资', 80], ['机构', 122], ['主力', 162]].forEach(([name, y]) => {
        out.push(text(1103, y, name, '#ffff66'));
    });
    draw('monitorChart', out);
}

function drawBottom() {
    const bars = [[126, 134], [111, 130], [98, 114], [93, 101], [85, 97], [68, 88], [43, 70], [24, 46], [0, 27], [-2, 3], [153, 175], [139, 157]];
    const out = [frame(175)];
    out.push(polyline([61, 61, 62, 64, 66, 68, 71, 74, 78, 82], '#f4f460', 2, 2));
    out.push(polyline([62, 61, 61], '#c040c8', 3));
    out.push(polyline([92, 95, 97, 100, 103, 105, 106, 108, 108, 109, 109], '#808080', 2));
    out.push(polyline([109, 108], '#c03a30', 3, 10));
    out.push(polyline([44, 60, 73, 77, 85, 103, 128, 146, 170, 173, 155, 140], '#80f0f0', 2));
    out.push(polyline([128, 112, 98, 95, 85, 68, 44, 25, 1, 0, 17, 32], '#9e7ba6', 2));
    bars.forEach(([top, bottom], i) => {
        const steps = i === 10 ? SILVER_STEPS : i === 11 ? LIME_STEPS : BRICK_STEPS;
        out.push(rect(cx(i) - 1, 85, 3, 3, '#3a7a28'));
        out.push(stripes(i, top, bottom, 62, steps));
    });
    out.push(text(1012, 162, '逃', '#4a9c35'));
    out.push(axis(21, '153.29'), axis(168, '-153.79'));
    draw('bottomChart', out);
}

function drawVolume() {
    const tops = [135, 119, 81, 105, 110, 106, 51, 42, 77, 33, 39, 87];
    const falling = [0, 2, 3, 9, 10];
    const out = [frame(175)];
    out.push('<rect x="1093" y="0" width="69" height="173" fill="none" stroke="#c8c04a" stroke-width="3" stroke-dasharray="7 5"/>');
    tops.forEach((y, i) => {
        if (falling.includes(i)) {
            out.push(rect(cx(i) - 34, y, 69, 174 - y, '#88fdff'));
        } else {
            out.push(`<rect x="${cx(i) - 34}" y="${y}" width="69" height="${173 - y}" fill="none" stroke="#d0453c" stroke-width="3"/>`);
        }
    });
    out.push(polyline([124, 125, 117, 116, 110, 104, 90, 82, 76, 62, 48, 55], '#5f9c48', 2));
    out.push(polyline([121, 122, 118, 116, 116, 114, 108, 99, 96, 85, 76, 73], '#5cb8dc', 2));
    out.push(axis(21, '225.9万'));
    draw('volumeChart', out);
}

drawMain();
drawState();
drawMonitor();
drawBottom();
drawVolume();
```
